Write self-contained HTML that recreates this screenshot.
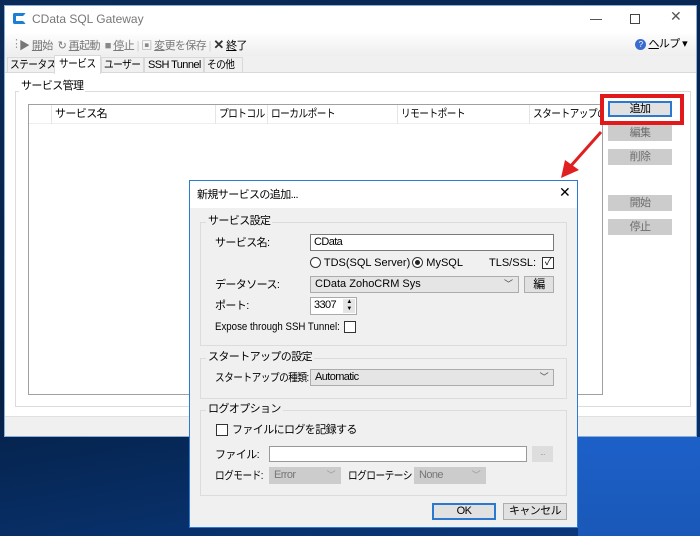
<!DOCTYPE html><html><head><meta charset="utf-8"><style>
*{box-sizing:border-box;margin:0;padding:0}
body{width:700px;height:536px;overflow:hidden;background:linear-gradient(170deg,#0a2a58 0%,#052046 60%,#0a3a80 100%);font-family:"Liberation Sans","Noto Sans CJK JP",sans-serif;font-size:11px;line-height:13px;color:#000;position:relative;letter-spacing:-0.6px}
div,span{white-space:nowrap}
.a{position:absolute}
.n{transform:scaleX(.88);transform-origin:left}
.btn{position:absolute;background:#e1e1e1;border:1px solid #adadad;text-align:center;line-height:14px}
.dis{background:#ccc;border:1px solid #ccc;color:#6d6d6d}
.grp{position:absolute;border:1px solid #dcdcdc}
.gl{position:absolute;top:-8px;left:5px;background:#f0f0f0;padding:0 2px}
.inp{position:absolute;background:#fff;border:1px solid #7a7a7a;padding-left:3px;line-height:15px}
.sel{position:absolute;background:#e5e5e5;border:1px solid #acacac;padding-left:4px;line-height:15px}
.chev{position:absolute;right:5px;top:0;color:#444;font-size:9px}
.tab{position:absolute;top:51px;height:16px;border:1px solid #d9d9d9;padding:0 2px;line-height:14px;background:#f0f0f0;overflow:hidden}
.th{position:absolute;top:0;height:19px;border-left:1px solid #e5e5e5;padding-left:3px;line-height:18px;overflow:hidden}
</style></head><body>
<div class="a" style="left:578px;top:437px;width:122px;height:99px;background:linear-gradient(180deg,#1c60c8,#1a58b8)"></div>
<div class="a" style="left:4px;top:5px;width:693px;height:432px;background:#fff;border:1px solid #8aaed8">
 <div class="a" style="left:8px;top:7px;width:13px;height:11px;border:3px solid #1b7fd6;border-right-color:transparent;border-radius:2px"></div>
 <div class="a" style="left:27px;top:7px;font-size:12px;color:#777;letter-spacing:0">CData SQL Gateway</div>
 <div class="a" style="left:585px;top:13px;width:12px;height:1px;background:#555"></div>
 <div class="a" style="left:625px;top:8px;width:10px;height:10px;border:1px solid #444"></div>
 <div class="a" style="left:665px;top:4px;color:#555;font-size:14px">✕</div>
 <div class="a" style="left:0;top:28px;width:691px;height:22px;background:linear-gradient(#fdfdfd,#eeeeee)"></div>
 <div class="a" style="left:6px;top:32px;color:#999">⋮</div>
 <div class="a" style="left:14px;top:32px;color:#777">▶ <u>開</u>始 &nbsp;↻ <u>再</u>起動 &nbsp;<span style="color:#888">■</span> <u>停</u>止 <span style="color:#ccc">|</span> <span style="color:#888">▣</span> <u>変</u>更を保存 <span style="color:#ccc">|</span> <b style="color:#333;font-size:13px">✕</b> <span style="color:#000"><u>終</u>了</span></div>
 <div class="a" style="left:630px;top:32px"><span style="display:inline-block;width:11px;height:11px;border-radius:50%;background:#3a6cd0;color:#fff;font-size:8px;text-align:center;line-height:11px">?</span> <u>ヘ</u>ルプ ▾</div>
 <div class="a" style="left:0;top:50px;width:691px;height:17px;background:#f0f0f0;border-bottom:1px solid #d9d9d9"></div>
 <div class="tab" style="left:2px;width:49px"><div class="n">ステータス</div></div>
 <div class="tab" style="left:49px;top:49px;height:19px;width:47px;border-bottom:none;padding-left:4px;line-height:16px;background:#fff"><div class="n">サービス</div></div>
 <div class="tab" style="left:96px;width:43px"><div class="n">ユーザー</div></div>
 <div class="tab" style="left:139px;width:60px;padding-left:3px">SSH Tunnel</div>
 <div class="tab" style="left:199px;width:39px"><div class="n">その他</div></div>
 <div class="a" style="left:10px;top:85px;width:676px;height:316px;border:1px solid #dcdcdc"></div>
 <div class="a" style="left:14px;top:74px;background:#fff;padding:0 2px">サービス管理</div>
 <div class="a" style="left:23px;top:98px;width:575px;height:291px;border:1px solid #a0a0a0;background:#fff;overflow:hidden">
  <div class="a" style="left:0;top:0;width:573px;height:19px;border-bottom:1px solid #eee"></div>
  <div class="th" style="left:22px;width:164px">サービス名</div>
  <div class="th" style="left:186px;width:52px"><div class="n">プロトコル</div></div>
  <div class="th" style="left:238px;width:130px"><div class="n">ローカルポート</div></div>
  <div class="th" style="left:368px;width:132px"><div class="n">リモートポート</div></div>
  <div class="th" style="left:500px;width:73px"><div class="n">スタートアップの種類</div></div>
 </div>
 <div class="a" style="left:0;top:410px;width:691px;height:20px;background:#f0f0f0;border-top:1px solid #e0e0e0"></div>
</div>
<div class="btn" style="left:608px;top:101px;width:64px;height:16px;border:2px solid #2a78d0;background:#e1e1e1;line-height:12px">追加</div>
<div class="a" style="left:600px;top:94px;width:84px;height:31px;border:4px solid #e01a1a"></div>
<div class="btn dis" style="left:608px;top:125px;width:64px;height:16px">編集</div>
<div class="btn dis" style="left:608px;top:149px;width:64px;height:16px">削除</div>
<div class="btn dis" style="left:608px;top:195px;width:64px;height:16px">開始</div>
<div class="btn dis" style="left:608px;top:219px;width:64px;height:16px">停止</div>
<svg class="a" style="left:555px;top:130px" width="50" height="50"><line x1="46" y1="2" x2="14" y2="38" stroke="#e02020" stroke-width="3"/><polygon points="6,48 10,30 24,40" fill="#e02020"/></svg>
<div class="a" style="left:189px;top:180px;width:389px;height:348px;background:#f0f0f0;border:1px solid #2b7bd4">
 <div class="a" style="left:0;top:0;width:387px;height:27px;background:#fff"></div>
 <div class="a" style="left:7px;top:8px">新規サービスの追加...</div>
 <div class="a" style="left:369px;top:5px;font-size:14px">✕</div>
 <div class="grp" style="left:10px;top:41px;width:367px;height:124px"><span class="gl">サービス設定</span></div>
 <div class="a" style="left:25px;top:56px">サービス名:</div>
 <div class="inp" style="left:120px;top:53px;width:244px;height:17px">CData</div>
 <div class="a" style="left:120px;top:76px;letter-spacing:0"><span style="display:inline-block;width:11px;height:11px;border:1px solid #333;border-radius:50%;vertical-align:-2px;background:#fff"></span> TDS(SQL Server)<span style="display:inline-block;width:11px;height:11px;border:1px solid #333;border-radius:50%;vertical-align:-2px;background:#fff;position:relative;margin-left:2px"><span style="position:absolute;left:2px;top:2px;width:5px;height:5px;border-radius:50%;background:#222"></span></span> MySQL</div>
 <div class="a" style="left:299px;top:76px;letter-spacing:0">TLS/SSL:</div>
 <div class="a" style="left:352px;top:76px;width:12px;height:12px;border:1px solid #333;background:#fff;font-size:10px;line-height:10px;text-align:center">✓</div>
 <div class="a" style="left:25px;top:98px">データソース:</div>
 <div class="sel" style="left:120px;top:95px;width:209px;height:17px;letter-spacing:0">CData ZohoCRM Sys<span class="chev">﹀</span></div>
 <div class="btn" style="left:334px;top:95px;width:30px;height:17px;font-size:12px">編</div>
 <div class="a" style="left:25px;top:119px">ポート:</div>
 <div class="inp" style="left:120px;top:116px;width:47px;height:18px;border-color:#aaa">3307<span style="position:absolute;right:1px;top:1px;width:12px;height:14px;background:#e5e5e5;font-size:6px;line-height:7px;text-align:center">▲<br>▼</span></div>
 <div class="a n" style="left:25px;top:140px;letter-spacing:0">Expose through SSH Tunnel:</div>
 <div class="a" style="left:154px;top:140px;width:12px;height:12px;border:1px solid #333;background:#fff"></div>
 <div class="grp" style="left:10px;top:177px;width:367px;height:41px"><span class="gl">スタートアップの設定</span></div>
 <div class="a n" style="left:25px;top:191px">スタートアップの種類:</div>
 <div class="sel" style="left:120px;top:188px;width:244px;height:17px">Automatic<span class="chev">﹀</span></div>
 <div class="grp" style="left:10px;top:229px;width:367px;height:86px"><span class="gl">ログオプション</span></div>
 <div class="a" style="left:26px;top:243px;width:12px;height:12px;border:1px solid #333;background:#fff"></div>
 <div class="a" style="left:42px;top:243px">ファイルにログを記録する</div>
 <div class="a" style="left:25px;top:268px">ファイル:</div>
 <div class="inp" style="left:79px;top:265px;width:258px;height:16px;border-color:#999"></div>
 <div class="a" style="left:342px;top:265px;width:21px;height:16px;background:#ddd;color:#999;text-align:center;font-size:8px;line-height:14px">...</div>
 <div class="a n" style="left:25px;top:289px">ログモード:</div>
 <div class="sel" style="left:79px;top:286px;width:72px;height:17px;background:#ccc;border-color:#ccc;color:#777">Error<span class="chev" style="color:#999">﹀</span></div>
 <div class="a" style="left:158px;top:289px;width:66px;overflow:hidden"><div class="n">ログローテーション</div></div>
 <div class="sel" style="left:224px;top:286px;width:72px;height:17px;background:#ccc;border-color:#ccc;color:#777">None<span class="chev" style="color:#999">﹀</span></div>
 <div class="btn" style="left:242px;top:322px;width:64px;height:17px;border:2px solid #2a78d0;line-height:13px">OK</div>
 <div class="btn" style="left:313px;top:322px;width:64px;height:17px">キャンセル</div>
</div>
</body></html>
